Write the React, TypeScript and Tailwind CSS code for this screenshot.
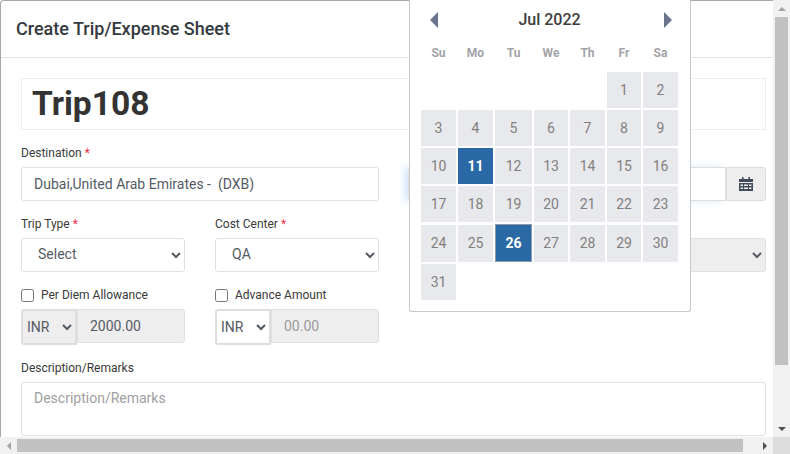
const weeks = [
  [0, 0, 0, 0, 0, 1, 2],
  [3, 4, 5, 6, 7, 8, 9],
  [10, 11, 12, 13, 14, 15, 16],
  [17, 18, 19, 20, 21, 22, 23],
  [24, 25, 26, 27, 28, 29, 30],
  [31, 0, 0, 0, 0, 0, 0],
];

const dayNames = ['Su', 'Mo', 'Tu', 'We', 'Th', 'Fr', 'Sa'];

function Calendar() {
  return (
    <div className="absolute left-[409px] top-0 z-10 h-[312px] w-[282px] rounded-b-[3px] border border-t-0 border-[#c9c9c9] bg-white px-[11px]">
      <div className="flex h-[38px] items-center justify-between pl-[9px] pr-[6px] pt-[1px]">
        <svg width="8" height="16" viewBox="0 0 8 16" className="fill-[#68758c]">
          <path d="M8 0 L0 8 L8 16 Z" />
        </svg>
        <span className="mr-[3px] text-[16px] font-medium text-[#3d3d3d]">Jul 2022</span>
        <svg width="8" height="16" viewBox="0 0 8 16" className="mr-[1px] fill-[#68758c]">
          <path d="M0 0 L8 8 L0 16 Z" />
        </svg>
      </div>
      <div className="grid h-[34px] grid-cols-[35px_35px_37px_34px_35px_34px_35px] gap-x-[2px] pt-[6px] text-center text-[12px] font-bold text-[#a3a3a8]">
        {dayNames.map((d) => (
          <span key={d}>{d}</span>
        ))}
      </div>
      {weeks.map((week, i) => (
        <div
          key={i}
          className={`grid h-[36px] grid-cols-[35px_35px_37px_34px_35px_34px_35px] gap-x-[2px] text-center text-[14px] leading-[36px] text-[#82807e] ${i === 0 ? '' : i >= 4 ? 'mt-[3px]' : 'mt-[2px]'}`}
        >
          {week.map((day, j) =>
            day === 0 ? (
              <span key={j} />
            ) : day === 11 ? (
              <span key={j} className="bg-[#2a69a6] font-bold text-white">
                {day}
              </span>
            ) : day === 26 ? (
              <span key={j} className="-mt-[1px] h-[38px] border border-[#8a9aaa] bg-[#2a69a6] font-bold text-white">
                {day}
              </span>
            ) : (
              <span key={j} className="bg-[#e8e9ec]">
                {day}
              </span>
            ),
          )}
        </div>
      ))}
    </div>
  );
}

function Label({ text, required }: { text?: string; required?: boolean }) {
  return (
    <div className="h-[14px] text-[12px] leading-[14px] text-[#3a3a3a]">
      {text}
      {required && <span className="text-[#f0334b]"> *</span>}
    </div>
  );
}

function CheckLabel({ text }: { text: string }) {
  return (
    <label className="flex h-[14px] items-center text-[12px] text-[#3a3a3a]">
      <input type="checkbox" className="mr-[7px] h-[13px] w-[13px]" />
      {text}
    </label>
  );
}

function FormSelect({ value, disabled }: { value: string; disabled?: boolean }) {
  return (
    <select
      defaultValue={value}
      className={`mt-[7px] h-[34px] w-full rounded-[3px] border border-[#e0e0e0] pb-[2px] pl-[12px] pr-[12px] text-[14px] text-[#555b64] ${disabled ? 'bg-[#eeeeee]' : 'bg-white'}`}
    >
      <option>{value}</option>
    </select>
  );
}

function AmountGroup({ value, shaded, placeholder }: { value?: string; shaded?: boolean; placeholder?: string }) {
  return (
    <div className="mt-[7px] flex h-[36px] items-start">
      <select
        defaultValue="INR"
        className={`h-[36px] w-[56px] rounded-l-[3px] border-2 border-[#dedede] text-[14px] text-[#555b64] ${shaded ? 'bg-[#eeeeee]' : 'bg-white'}`}
      >
        <option>INR</option>
      </select>
      <input
        disabled
        defaultValue={value}
        placeholder={placeholder}
        className="h-[34px] min-w-0 flex-1 rounded-r-[3px] border border-[#e0e0e0] bg-[#eeeeee] px-[12px] text-[14px] text-[#555b64] placeholder:text-[#9a9a9a]"
      />
    </div>
  );
}

export default function App() {
  return (
    <div className="relative grid h-[454px] w-[790px] grid-cols-[773px_17px] grid-rows-[437px_17px] overflow-hidden bg-white font-['Roboto',sans-serif]">
      {/* Modal */}
      <div className="overflow-hidden rounded-tl-[4px] border-l border-t border-[#a8a8ac] bg-white">
        <div className="flex h-[57px] items-center border-b border-[#e4e4e4] px-[15px] pb-[2px] text-[18px] font-medium text-[#343a40]">
          Create Trip/Expense Sheet
        </div>
        <div className="pl-[20px] pr-[6px] pt-[20px]">
          <div className="flex h-[52px] w-[745px] items-center border border-[#eeeeee] px-[10px] text-[33.6px] font-bold text-[#333333]">
            Trip108
          </div>
          <div className="mt-[16px] grid grid-cols-[358px_358px] gap-x-[29px]">
            <div>
              <Label text="Destination" required />
              <input
                defaultValue="Dubai,United Arab Emirates -  (DXB)"
                className="mt-[7px] h-[34px] w-full rounded-[3px] border border-[#e0e0e0] px-[12px] text-[14px] text-[#555b64]"
              />
            </div>
            <div>
              <Label />
              <div className="mt-[7px] flex h-[34px]">
                <input className="min-w-0 flex-1 rounded-l-[3px] border border-[#e0e0e0] shadow-[-4px_0_6px_rgba(120,180,240,0.3)]" />
                <div className="flex w-[40px] items-center justify-center rounded-r-[3px] border border-[#dddddd] bg-[#eeeeee]">
                  <svg width="14" height="14" viewBox="0 0 14 14" className="fill-[#3f4a5a]">
                    <path d="M3 0h1.500v2h5V0H11v2h3v3H0V2h3zM0 6h14v8H0zm1.500 1.500v1.500h2.500V7.500zm3.500 0v1.500h4V7.500zm5 0v1.500h2.500V7.500zm-8.500 3v1.500h2.500v-1.500zm3.500 0v1.500h4v-1.500zm5 0v1.500h2.500v-1.500z" fillRule="evenodd" />
                  </svg>
                </div>
              </div>
            </div>
          </div>
          <div className="mt-[16px] grid grid-cols-[358px_358px] gap-x-[29px]">
            <div className="grid grid-cols-[164px_164px] gap-x-[30px]">
              <div>
                <Label text="Trip Type" required />
                <FormSelect value="Select" />
              </div>
              <div>
                <Label text="Cost Center" required />
                <FormSelect value="QA" />
              </div>
            </div>
            <div className="grid grid-cols-[164px_164px] gap-x-[30px]">
              <div />
              <div>
                <Label />
                <FormSelect value="" disabled />
              </div>
            </div>
          </div>
          <div className="mt-[16px] grid w-[358px] grid-cols-[164px_164px] gap-x-[30px]">
            <div>
              <CheckLabel text="Per Diem Allowance" />
              <AmountGroup value="2000.00" shaded />
            </div>
            <div>
              <CheckLabel text="Advance Amount" />
              <AmountGroup placeholder="00.00" />
            </div>
          </div>
          <div className="mt-[16px]">
            <Label text="Description/Remarks" />
            <textarea
              placeholder="Description/Remarks"
              className="mt-[7px] block h-[54px] w-[745px] resize-none rounded-[3px] border border-[#e0e0e0] px-[12px] py-[5px] text-[14px] placeholder:text-[#a0a0a0]"
            />
          </div>
        </div>
      </div>

      {/* Vertical scrollbar */}
      <div className="flex flex-col items-center bg-[#f1f1f1]">
        <div className="flex h-[17px] items-center justify-center">
          <div className="h-0 w-0 border-x-[4px] border-b-[4px] border-x-transparent border-b-[#a3a3a3]" />
        </div>
        <div className="h-[348px] w-[13px] bg-[#c1c1c1]" />
        <div className="mt-auto flex h-[17px] items-center justify-center">
          <div className="h-0 w-0 border-x-[4px] border-t-[4px] border-x-transparent border-t-[#505050]" />
        </div>
      </div>

      {/* Horizontal scrollbar */}
      <div className="flex items-center bg-[#f1f1f1]">
        <div className="flex w-[17px] justify-center">
          <div className="h-0 w-0 border-y-[4px] border-r-[4px] border-y-transparent border-r-[#a3a3a3]" />
        </div>
        <div className="h-[13px] w-[726px] bg-[#c1c1c1]" />
        <div className="ml-auto flex w-[17px] justify-center">
          <div className="h-0 w-0 border-y-[4px] border-l-[4px] border-y-transparent border-l-[#505050]" />
        </div>
      </div>
      <div className="bg-[#dcdcdc]" />

      <Calendar />
    </div>
  );
}
